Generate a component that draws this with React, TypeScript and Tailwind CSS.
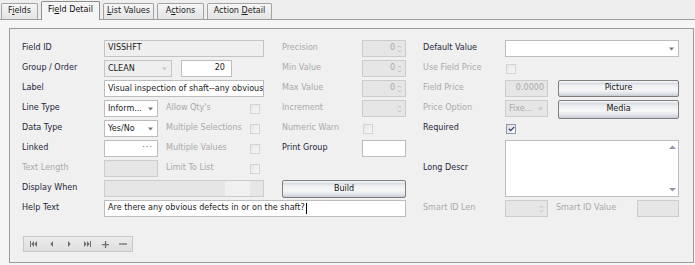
import React from 'react';

const lbl = 'flex items-center whitespace-nowrap text-[#1f1f3a]';
const dim = 'flex items-center whitespace-nowrap text-[#a9a9a9]';

function Arrow({ muted }: { muted?: boolean }) {
  return (
    <svg width="5" height="4" viewBox="0 0 5 4" className="shrink-0">
      <path d="M0 0.5h5L2.5 3.5z" fill={muted ? '#c6c6c6' : '#777777'} />
    </svg>
  );
}

function Combo({ value, className = '', muted, readOnly }: { value: string; className?: string; muted?: boolean; readOnly?: boolean }) {
  const look = muted
    ? 'border-[#cccccc] bg-[#e6e6e6] text-[#a9a9a9]'
    : readOnly
      ? 'border-[#c4c4c4] bg-[#efefef] text-[#1a1a1a]'
      : 'border-[#bdbdbd] bg-white text-[#1a1a1a]';
  return (
    <div className={`flex h-full items-center border pl-[3px] pr-[4px] ${look} ${className}`}>
      <span className="flex-1 truncate leading-[12px]">{value}</span>
      <Arrow muted={muted || readOnly} />
    </div>
  );
}

function Spin({ value, className = '' }: { value?: string; className?: string }) {
  return (
    <div className={`flex h-full items-center border border-[#cccccc] bg-[#e6e6e6] text-[#a9a9a9] ${className}`}>
      <span className="flex-1 pr-[2px] text-right">{value}</span>
      <svg width="5" height="10" viewBox="0 0 5 10" className="mr-[3px] shrink-0">
        <path d="M1 3.5L2.5 2L4 3.5" fill="none" stroke="#b4b4b4" strokeWidth="0.9" />
        <path d="M1 6.5L2.5 8L4 6.5" fill="none" stroke="#b4b4b4" strokeWidth="0.9" />
      </svg>
    </div>
  );
}

function Check({ checked, muted }: { checked?: boolean; muted?: boolean }) {
  return (
    <span
      className={`flex h-[10px] w-[10px] shrink-0 items-center justify-center border ${
        muted
          ? 'border-[#d3d3d3] bg-[linear-gradient(135deg,#e6e6e6,#f8f8f8)]'
          : 'border-[#8f98ab] bg-[linear-gradient(135deg,#dcdcdc,#ffffff)]'
      }`}
    >
      {checked && (
        <svg width="7" height="6" viewBox="0 0 7 6">
          <path d="M0.8 2.8L2.7 4.6L6.2 0.9" fill="none" stroke="#2c3c6c" strokeWidth="1.3" />
        </svg>
      )}
    </span>
  );
}

function Btn({ children, className = '' }: { children: React.ReactNode; className?: string }) {
  return (
    <div
      className={`flex items-center justify-center rounded-[2px] border border-[#7e7e7e] bg-[linear-gradient(to_bottom,#fbfbfb_0%,#d9dee4_16%,#eef0f2_32%,#f7f7f7_60%,#dfe3e8_84%,#c7ccd3_100%)] text-[#111111] ${className}`}
    >
      {children}
    </div>
  );
}

function Tab({ children, active, className = '' }: { children: React.ReactNode; active?: boolean; className?: string }) {
  return (
    <div
      className={`flex items-center justify-center rounded-t-[2px] border border-b-0 ${
        active
          ? 'relative z-10 -mb-[1px] h-[19px] border-[#8e8e8e] bg-[#f5f5f5] pb-[2px] text-[#111111]'
          : 'h-[16px] border-[#a3a3a3] bg-[linear-gradient(to_bottom,#f6f6f6,#e3e3e3)] text-[#222222]'
      } ${className}`}
    >
      <span className="whitespace-pre">{children}</span>
    </div>
  );
}

function NavBar() {
  const c = '#6f6f6f';
  return (
    <div className="ml-[1px] mt-[19px] flex h-[16px] w-[110px] border border-[#c9c9c9] bg-[linear-gradient(to_bottom,#ececec,#dedede)]">
      <span className="flex w-[18px] items-center justify-center">
        <svg width="7" height="6" viewBox="0 0 7 6"><path d="M0 0h1v6H0zM4 0v6L1.3 3zM7 0v6L4.3 3z" fill={c} /></svg>
      </span>
      <span className="flex w-[18px] items-center justify-center">
        <svg width="3" height="6" viewBox="0 0 3 6"><path d="M3 0v6L0.3 3z" fill={c} /></svg>
      </span>
      <span className="flex w-[18px] items-center justify-center">
        <svg width="3" height="6" viewBox="0 0 3 6"><path d="M0 0v6L2.7 3z" fill={c} /></svg>
      </span>
      <span className="flex w-[18px] items-center justify-center">
        <svg width="7" height="6" viewBox="0 0 7 6"><path d="M0 0v6L2.7 3zM3 0v6L5.7 3zM6 0h1v6H6z" fill={c} /></svg>
      </span>
      <span className="flex w-[18px] items-center justify-center">
        <svg width="7" height="7" viewBox="0 0 7 7"><path d="M2.9 0h1.3v7H2.9zM0 2.9h7v1.3H0z" fill={c} /></svg>
      </span>
      <span className="flex w-[18px] items-center justify-center">
        <svg width="8" height="2" viewBox="0 0 8 2"><path d="M0 0.35h8v1.3H0z" fill={c} /></svg>
      </span>
    </div>
  );
}

export default function App() {
  const white = 'flex h-full items-center border border-[#bdbdbd] bg-white px-[3px] text-[#1a1a1a]';
  const grey = 'flex h-full items-center border border-[#cccccc] bg-[#e6e6e6]';

  return (
    <div className="h-[265px] w-[695px] overflow-hidden bg-[#eeeeee] font-['DejaVu_Sans',sans-serif] text-[8.05px] leading-none text-[#1a1a1a]">
      {/* Tabs */}
      <div className="flex h-[20px] items-end gap-[3px] border-b border-[#9c9c9c] pl-[1px]">
        <Tab className="w-[37px]">F<span className="underline">i</span>elds</Tab>
        <Tab active className="w-[59px]">Fi<span className="underline">e</span>ld Detail</Tab>
        <Tab className="w-[51px]"><span className="underline">L</span>ist Values</Tab>
        <Tab className="w-[47px]">A<span className="underline">c</span>tions</Tab>
        <Tab className="w-[65px]">Action <span className="underline">D</span>etail</Tab>
      </div>

      {/* Page */}
      <div className="h-[245px] bg-[#f5f5f5] pl-[9px] pt-[8px]">
        <div className="h-[235px] w-[685px] border border-[#9a9a9a] bg-[#f0f0f0] pl-[12px] pt-[11px]">
          <div className="grid grid-cols-[82px_160px_18px_80px_44px_17px_82px_174px] grid-rows-[repeat(9,17px)] gap-y-[3px]">
            {/* row 1 */}
            <div className={`${lbl} col-start-1 row-start-1`}>Field ID</div>
            <div className="col-start-2 row-start-1">
              <div className="flex h-full items-center border border-[#c4c4c4] bg-[#efefef] px-[3px]">VISSHFT</div>
            </div>
            <div className={`${dim} col-start-4 row-start-1`}>Precision</div>
            <div className="col-start-5 row-start-1"><Spin value="0" /></div>
            <div className={`${lbl} col-start-7 row-start-1`}>Default Value</div>
            <div className="col-start-8 row-start-1"><Combo value="" /></div>

            {/* row 2 */}
            <div className={`${lbl} col-start-1 row-start-2`}>Group / Order</div>
            <div className="col-start-2 row-start-2 flex gap-[9px]">
              <Combo value="CLEAN" readOnly className="w-[68px]" />
              <div className="flex h-full w-[51px] items-center justify-end border border-[#bdbdbd] bg-white pr-[6px]">20</div>
            </div>
            <div className={`${dim} col-start-4 row-start-2`}>Min Value</div>
            <div className="col-start-5 row-start-2"><Spin value="0" /></div>
            <div className={`${dim} col-start-7 row-start-2`}>Use Field Price</div>
            <div className="col-start-8 row-start-2 flex items-center pl-[1px]"><Check muted /></div>

            {/* row 3 */}
            <div className={`${lbl} col-start-1 row-start-3`}>Label</div>
            <div className="col-start-2 row-start-3">
              <div className={`${white} overflow-hidden whitespace-nowrap leading-[12px]`}>Visual inspection of shaft--any obvious</div>
            </div>
            <div className={`${dim} col-start-4 row-start-3`}>Max Value</div>
            <div className="col-start-5 row-start-3"><Spin value="0" /></div>
            <div className={`${dim} col-start-7 row-start-3`}>Field Price</div>
            <div className="col-start-8 row-start-3 flex">
              <div className={`${grey} w-[43px] justify-end pr-[3px] text-[#a9a9a9]`}>0.0000</div>
              <Btn className="ml-auto h-full w-[121px]">Picture</Btn>
            </div>

            {/* row 4 */}
            <div className={`${lbl} col-start-1 row-start-4`}>Line Type</div>
            <div className="col-start-2 row-start-4 flex items-center">
              <Combo value="Inform..." className="w-[54px]" />
              <span className="ml-[8px] flex-1 text-[#a9a9a9]">Allow Qty's</span>
              <span className="mr-[4px]"><Check muted /></span>
            </div>
            <div className={`${dim} col-start-4 row-start-4`}>Increment</div>
            <div className="col-start-5 row-start-4"><Spin /></div>
            <div className={`${dim} col-start-7 row-start-4`}>Price Option</div>
            <div className="col-start-8 row-start-4 flex">
              <Combo value="Fixe..." muted className="w-[43px]" />
              <Btn className="-mb-[2px] ml-auto h-[19px] w-[121px]">Media</Btn>
            </div>

            {/* row 5 */}
            <div className={`${lbl} col-start-1 row-start-5`}>Data Type</div>
            <div className="col-start-2 row-start-5 flex items-center">
              <Combo value="Yes/No" className="w-[54px]" />
              <span className="ml-[8px] flex-1 text-[#a9a9a9]">Multiple Selections</span>
              <span className="mr-[4px]"><Check muted /></span>
            </div>
            <div className={`${dim} col-start-4 row-start-5`}>Numeric Warn</div>
            <div className="col-start-5 row-start-5 flex items-center pl-[1px]"><Check muted /></div>
            <div className={`${lbl} col-start-7 row-start-5`}>Required</div>
            <div className="col-start-8 row-start-5 flex items-center pl-[1px]"><Check checked /></div>

            {/* row 6 */}
            <div className={`${lbl} col-start-1 row-start-6`}>Linked</div>
            <div className="col-start-2 row-start-6 flex items-center">
              <div className="flex h-full w-[54px] items-center justify-end border border-[#bdbdbd] bg-white pr-[4px] tracking-[1px] text-[#555555]">···</div>
              <span className="ml-[8px] flex-1 text-[#a9a9a9]">Multiple Values</span>
              <span className="mr-[4px]"><Check muted /></span>
            </div>
            <div className={`${lbl} col-start-4 row-start-6`}>Print Group</div>
            <div className="col-start-5 row-start-6"><div className={white} /></div>
            <div className={`${lbl} col-start-7 row-start-6 row-span-3`}>Long Descr</div>
            <div className="col-start-8 row-start-6 row-span-3 flex justify-end border border-[#bdbdbd] bg-white">
              <div className="flex w-[12px] flex-col items-center justify-between py-[4px]">
                <svg width="7" height="4" viewBox="0 0 7 4"><path d="M0 4L3.5 0.5L7 4z" fill="#8d98ad" /></svg>
                <svg width="7" height="4" viewBox="0 0 7 4"><path d="M0 0L3.5 3.5L7 0z" fill="#8d98ad" /></svg>
              </div>
            </div>

            {/* row 7 */}
            <div className={`${dim} col-start-1 row-start-7`}>Text Length</div>
            <div className="col-start-2 row-start-7 flex items-center">
              <div className={`${grey} w-[54px]`} />
              <span className="ml-[8px] flex-1 text-[#a9a9a9]">Limit To List</span>
              <span className="mr-[4px]"><Check muted /></span>
            </div>

            {/* row 8 */}
            <div className={`${lbl} col-start-1 row-start-8`}>Display When</div>
            <div className="col-start-2 row-start-8">
              <div className={`${grey} justify-end pr-[13px]`}>
                <span className="h-full w-[25px] bg-[#f0f0f0]" />
              </div>
            </div>
            <Btn className="col-start-4 col-span-2 row-start-8 -mb-[1px]">Build</Btn>

            {/* row 9 */}
            <div className={`${lbl} col-start-1 row-start-9`}>Help Text</div>
            <div className="col-start-2 col-span-4 row-start-9">
              <div className={white}>
                Are there any obvious defects in or on the shaft?
                <span className="ml-[1px] h-[11px] w-[1px] bg-black" />
              </div>
            </div>
            <div className={`${dim} col-start-7 row-start-9`}>Smart ID Len</div>
            <div className="col-start-8 row-start-9 flex items-center">
              <Spin className="w-[43px]" />
              <span className="ml-[8px] text-[#a9a9a9]">Smart ID Value</span>
              <div className={`${grey} ml-auto w-[42px]`} />
            </div>
          </div>

          <NavBar />
        </div>
      </div>
    </div>
  );
}
